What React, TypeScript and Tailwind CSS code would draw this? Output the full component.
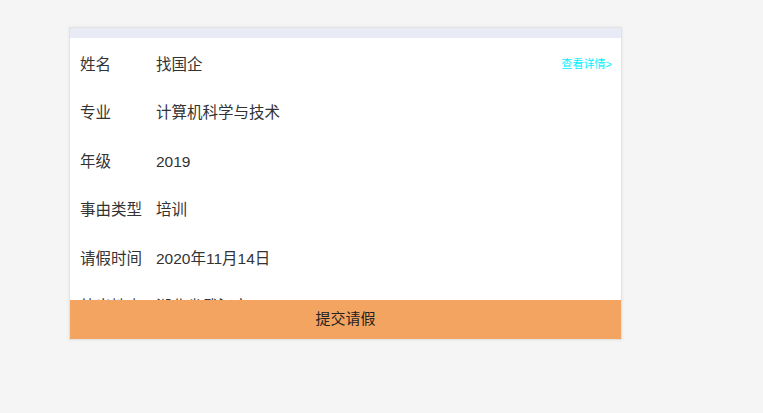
const rows = [
  { label: "姓名", value: "找国企" },
  { label: "专业", value: "计算机科学与技术" },
  { label: "年级", value: "2019" },
  { label: "事由类型", value: "培训" },
  { label: "请假时间", value: "2020年11月14日" },
  { label: "外出地点", value: "湖北省武汉市" },
];

export default function App() {
  return (
    <div className="min-h-[413px] bg-[#f5f5f5] pt-[27px] pl-[69px] font-['Liberation_Sans','Noto_Sans_CJK_SC',sans-serif] text-[15.5px] text-[#333]">
      <div className="flex h-[313px] w-[553px] flex-col overflow-hidden border border-[#e2e2e2] bg-white shadow-[0_0_4px_rgba(0,0,0,0.06)]">
        <div className="h-[10px] shrink-0 bg-[#e8ebf5]" />
        <div className="flex-1 overflow-hidden pt-[2px]">
          {rows.map((row, i) => (
            <div key={row.label} className="flex h-[48.5px] items-center pl-[10px] pr-[9px]">
              <span className="w-[76px] shrink-0">{row.label}</span>
              <span className="flex-1">{row.value}</span>
              {i === 0 && <span className="text-[11px] text-[#00f0ff]">查看详情&gt;</span>}
            </div>
          ))}
        </div>
        <button className="h-[39px] shrink-0 bg-[#f4a461] text-[15px] text-[#222]">提交请假</button>
      </div>
    </div>
  );
}
